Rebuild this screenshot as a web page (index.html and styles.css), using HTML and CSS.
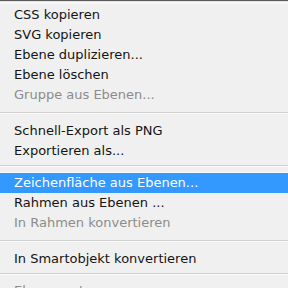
FILE: index.html
```html
<!DOCTYPE html>
<html lang="de">
<head>
<meta charset="utf-8">
<link rel="stylesheet" href="styles.css">
</head>
<body>
<div class="menu">
  <div class="top"></div>
  <div class="group g1">
    <div class="item">CSS kopieren</div>
    <div class="item">SVG kopieren</div>
    <div class="item">Ebene duplizieren...</div>
    <div class="item">Ebene löschen</div>
    <div class="item disabled">Gruppe aus Ebenen...</div>
  </div>
  <div class="sep s1"></div>
  <div class="group">
    <div class="item">Schnell-Export als PNG</div>
    <div class="item">Exportieren als...</div>
  </div>
  <div class="sep s2"></div>
  <div class="group">
    <div class="item active">Zeichenfläche aus Ebenen...</div>
    <div class="item">Rahmen aus Ebenen ...</div>
    <div class="item disabled">In Rahmen konvertieren</div>
  </div>
  <div class="sep s3"></div>
  <div class="group">
    <div class="item">In Smartobjekt konvertieren</div>
  </div>
  <div class="sep s4"></div>
  <div class="group">
    <div class="item disabled">Ebene rastern</div>
  </div>
</div>
</body>
</html>
```

FILE: styles.css
```css
html, body {
  margin: 0;
  padding: 0;
  background: #f0f0f0;
  overflow: hidden;
}
.menu {
  width: 288px;
  height: 288px;
  overflow: hidden;
  background: #f0f0f0;
  font-family: "DejaVu Sans", Tahoma, sans-serif;
  font-size: 13px;
  color: #141414;
}
.top {
  height: 1px;
  background: #5a5a5a;
  border-bottom: 1px solid #e4e4e4;
  box-shadow: 0 2px 0 #f8f8f8;
  margin-bottom: 3px;
}
.item {
  height: 20px;
  line-height: 20px;
  padding-left: 14px;
  white-space: nowrap;
}
.item.disabled {
  color: #8c8c8c;
}
.item.active {
  background: #3399ff;
  color: #fff;
  box-shadow: 0 -1px 0 #fbfbfb;
}
.sep {
  height: 1px;
  background: #cfcfcf;
  border-bottom: 1px solid #fafafa;
}
.s1 { margin: 7px 0 7px; }
.s2 { margin: 4px 0 6px; }
.s3 { margin: 7px 0 7px; }
.s4 { margin: 4px 0 6px; }
```
